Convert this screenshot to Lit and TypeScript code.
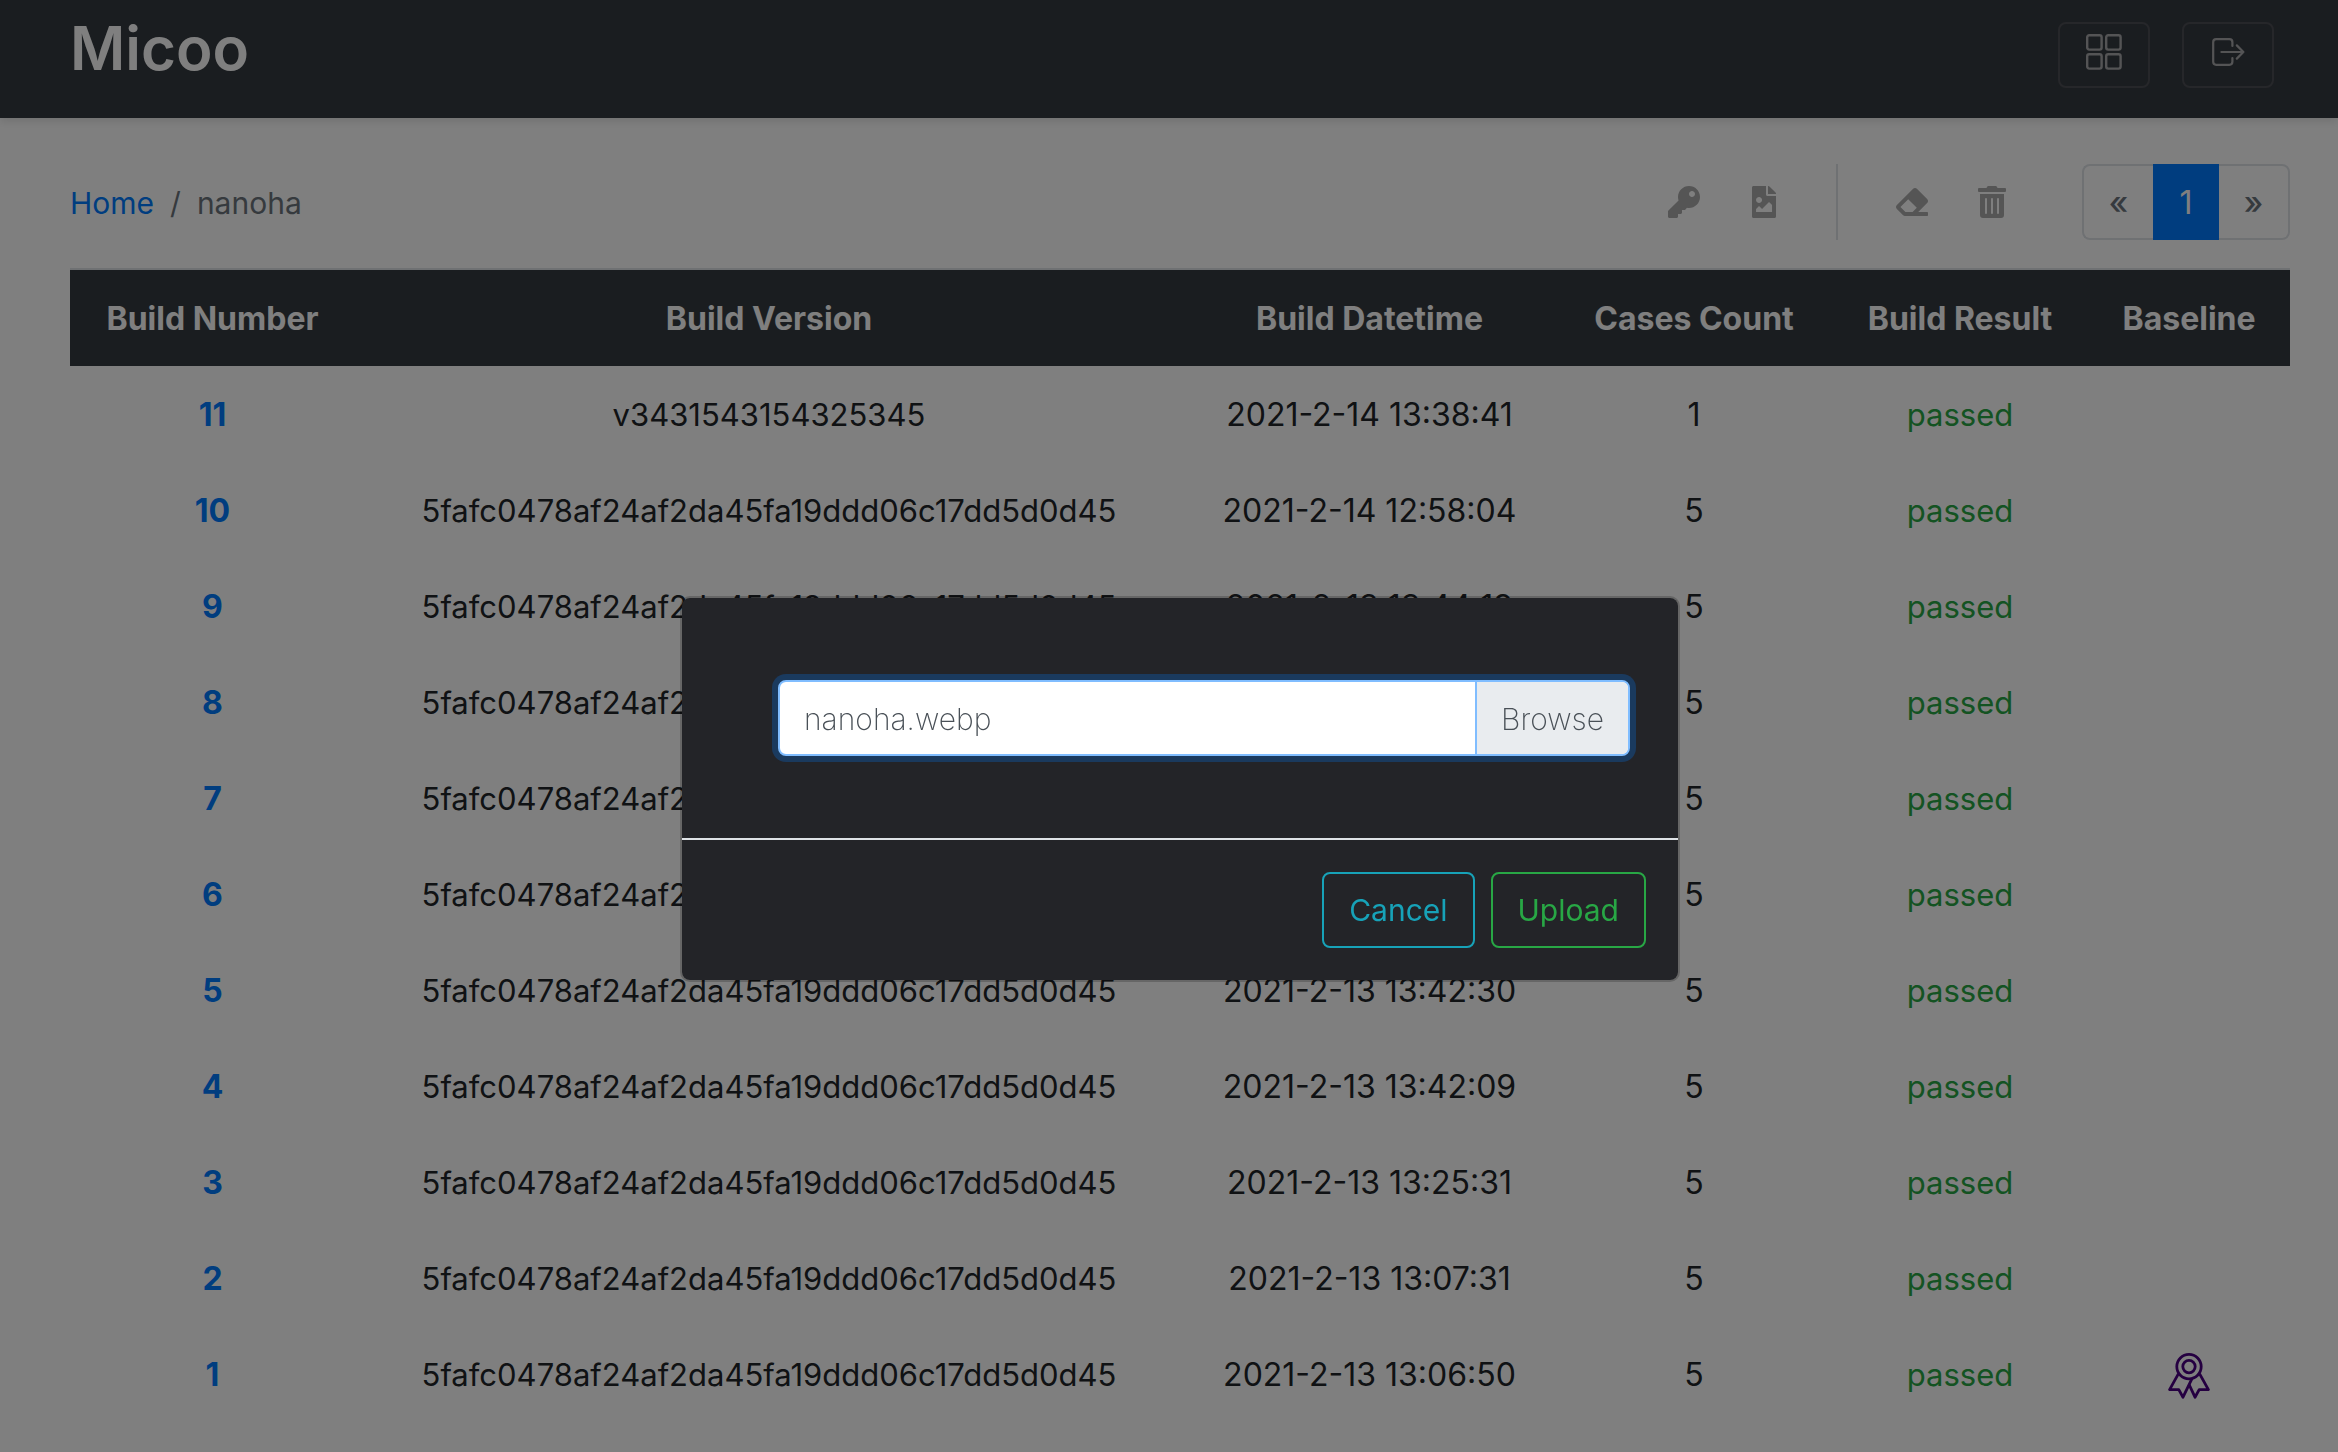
import { LitElement, html, css } from "lit";
import { customElement } from "lit/decorators.js";

interface Build {
  num: number;
  version: string;
  time: string;
  cases: number;
  baseline?: boolean;
}

const HASH = "5fafc0478af24af2da45fa19ddd06c17dd5d0d45";

const BUILDS: Build[] = [
  { num: 11, version: "v3431543154325345", time: "2021-2-14 13:38:41", cases: 1 },
  { num: 10, version: HASH, time: "2021-2-14 12:58:04", cases: 5 },
  { num: 9, version: HASH, time: "2021-2-13 13:44:19", cases: 5 },
  { num: 8, version: HASH, time: "2021-2-13 13:43:52", cases: 5 },
  { num: 7, version: HASH, time: "2021-2-13 13:43:20", cases: 5 },
  { num: 6, version: HASH, time: "2021-2-13 13:42:51", cases: 5 },
  { num: 5, version: HASH, time: "2021-2-13 13:42:30", cases: 5 },
  { num: 4, version: HASH, time: "2021-2-13 13:42:09", cases: 5 },
  { num: 3, version: HASH, time: "2021-2-13 13:25:31", cases: 5 },
  { num: 2, version: HASH, time: "2021-2-13 13:07:31", cases: 5 },
  { num: 1, version: HASH, time: "2021-2-13 13:06:50", cases: 5, baseline: true },
];

const gridIcon = html`<svg width="36" height="36" viewBox="0 0 36 36" fill="none" stroke="currentColor" stroke-width="2.4" aria-hidden="true">
  <rect x="1.2" y="1.2" width="14.4" height="14.4" rx="2" />
  <rect x="20.2" y="1.2" width="14.4" height="14.4" rx="2" />
  <rect x="1.2" y="20.2" width="14.4" height="14.4" rx="2" />
  <rect x="20.2" y="20.2" width="14.4" height="14.4" rx="2" />
</svg>`;

const exitIcon = html`<svg width="34" height="36" viewBox="0 0 34 36" fill="none" stroke="currentColor" stroke-width="2.2" stroke-linecap="round" stroke-linejoin="round" aria-hidden="true">
  <path d="M21.400 12V8.200a3 3 0 0 0-3-3H5.200a3 3 0 0 0-3 3v19.600a3 3 0 0 0 3 3h13.200a3 3 0 0 0 3-3V24" />
  <path d="M10.400 18H32.400M25.800 11.400 32.400 18l-6.600 6.600" />
</svg>`;

const keyIcon = html`<svg width="32" height="32" viewBox="0 0 512 512" aria-hidden="true"><path d="M512 176.001C512 273.203 433.202 352 336 352c-11.220 0-22.190-1.062-32.827-3.069l-24.012 27.014A23.999 23.999 0 0 1 261.223 384H224v40c0 13.255-10.745 24-24 24h-40v40c0 13.255-10.745 24-24 24H24c-13.255 0-24-10.745-24-24v-78.059c0-6.365 2.529-12.470 7.029-16.971l161.802-161.802C163.108 213.814 160 195.271 160 176 160 78.798 238.797.001 335.999 0 433.488-.001 512 78.511 512 176.001zM336 128c0 26.510 21.490 48 48 48s48-21.490 48-48-21.490-48-48-48-48 21.490-48 48z" /></svg>`;

const imageFileIcon = html`<svg width="24" height="32" viewBox="0 0 384 512" aria-hidden="true"><path d="M384 121.941V128H256V0h6.059a24 24 0 0 1 16.970 7.029l97.941 97.941a24.002 24.002 0 0 1 7.030 16.971zM248 160c-13.200 0-24-10.800-24-24V0H24C10.745 0 0 10.745 0 24v464c0 13.255 10.745 24 24 24h336c13.255 0 24-10.745 24-24V160H248zm-135.455 16c26.510 0 48 21.490 48 48s-21.490 48-48 48-48-21.490-48-48 21.491-48 48-48zm208 240h-256l.485-48.485L104.545 328c4.686-4.686 11.799-4.201 16.485.485L160.545 368 264.060 264.485c4.686-4.686 12.284-4.686 16.971 0L320.545 304v112z" /></svg>`;

const eraserIcon = html`<svg width="32" height="32" viewBox="0 0 512 512" aria-hidden="true"><path d="M497.941 273.941c18.745-18.745 18.745-49.137 0-67.882l-160-160c-18.745-18.745-49.136-18.746-67.883 0l-256 256c-18.745 18.745-18.745 49.137 0 67.882l96 96A48.004 48.004 0 0 0 144 480h356c6.627 0 12-5.373 12-12v-40c0-6.627-5.373-12-12-12H355.883l142.058-142.059zm-302.627-62.627l137.373 137.373L265.373 416H150.628l-80-80 124.686-124.686z" /></svg>`;

const trashIcon = html`<svg width="28" height="32" viewBox="0 0 448 512" aria-hidden="true"><path d="M32 464a48 48 0 0 0 48 48h288a48 48 0 0 0 48-48V128H32zm272-256a16 16 0 0 1 32 0v224a16 16 0 0 1-32 0zm-96 0a16 16 0 0 1 32 0v224a16 16 0 0 1-32 0zm-96 0a16 16 0 0 1 32 0v224a16 16 0 0 1-32 0zM432 32H312l-9.400-18.700A24 24 0 0 0 281.100 0H166.800a23.720 23.720 0 0 0-21.400 13.300L136 32H16A16 16 0 0 0 0 48v32a16 16 0 0 0 16 16h416a16 16 0 0 0 16-16V48a16 16 0 0 0-16-16z" /></svg>`;

const awardIcon = html`<svg width="42" height="48" viewBox="0 -2 42 48" fill="none" stroke="currentColor" stroke-width="2.8" stroke-linejoin="round" role="img" aria-label="Baseline build">
  <circle cx="21" cy="13.600" r="12.200" />
  <circle cx="21" cy="13.600" r="6.200" />
  <path d="M10.500 20.600 1.600 36.600h9.200l4.200 7.600L24 25.600" />
  <path d="M31.500 20.600l8.900 16h-9.200L27 44.200 21 31.400" />
</svg>`;

@customElement("app-root")
export class AppRoot extends LitElement {
  static styles = css`
    :host {
      display: block;
      min-height: 100vh;
      background: #fff;
      color: #212529;
      font-family: Inter, "Liberation Sans", sans-serif;
      font-size: 32px;
      line-height: 48px;
    }
    * { box-sizing: border-box; }
    a { color: #007bff; text-decoration: none; }
    button { font: inherit; cursor: pointer; }

    .topbar {
      display: flex;
      align-items: flex-start;
      justify-content: space-between;
      height: 118px;
      padding: 0 64px 0 70px;
      background: #343a40;
      box-shadow: 0 4px 8px rgba(0, 0, 0, 0.1);
    }
    .brand { color: #fff; font-size: 60px; line-height: 96px; font-weight: 600; }
    .top-actions { display: flex; gap: 32px; padding-top: 22px; }
    .top-btn {
      display: flex;
      justify-content: center;
      width: 92px;
      height: 66px;
      padding: 10px 0 0;
      color: #a9a9ab;
      background: transparent;
      border: 2px solid #4d4e54;
      border-radius: 8px;
    }

    .page { padding: 46px 48px 0 70px; }
    .toolbar {
      display: flex;
      align-items: center;
      justify-content: space-between;
      height: 76px;
      margin-bottom: 28px;
    }
    .crumbs {
      display: flex;
      gap: 16px;
      margin: 0;
      padding: 2px 0 0;
      list-style: none;
      font-size: 30px;
      color: #6c757d;
    }
    .tools { display: flex; align-items: center; }
    .tool {
      display: flex;
      align-items: center;
      justify-content: center;
      width: 80px;
      height: 76px;
      padding: 0;
      color: #aaa;
      background: none;
      border: 0;
    }
    .tool svg { fill: currentColor; }
    .split { width: 2px; height: 76px; margin: 0 34px 0 32px; background: #dee2e6; }
    .pager {
      display: flex;
      margin: 0 0 0 50px;
      padding: 0;
      list-style: none;
    }
    .pager a {
      display: block;
      height: 76px;
      width: 71px;
      padding: 13px 0 11px;
      border: 2px solid #dee2e6;
      text-align: center;
      color: #6c757d;
      font-weight: 500;
    }
    .pager li:first-child a { border-right: 0; border-radius: 8px 0 0 8px; }
    .pager li:last-child a { border-left: 0; border-radius: 0 8px 8px 0; }
    .pager .current {
      width: 66px;
      color: #fff;
      background: #007bff;
      border-color: #007bff;
      font-weight: 400;
    }

    .builds {
      width: 100%;
      table-layout: fixed;
      border-collapse: separate;
      border-spacing: 0;
      text-align: center;
    }
    .builds td { height: 96px; padding: 2px 0 0; }
    .builds th {
      height: 98px;
      padding: 2px 0 0;
      color: #fff;
      background: #343a40;
      border-top: 2px solid #dee2e6;
      font-weight: 700;
    }
    .c-num { width: 285px; }
    .c-ver { width: 828px; }
    .c-time { width: 373px; }
    .c-cases { width: 276px; }
    .c-result { width: 256px; }
    .c-base { width: 202px; }
    .num { font-weight: 700; }
    .builds .version { font-size: 31px; }
    .builds .passed { color: #28a745; font-size: 31px; }
    .award { color: #4b0082; line-height: 0; }

    .backdrop {
      position: fixed;
      inset: 0;
      display: flex;
      align-items: flex-start;
      justify-content: center;
      padding: 596px 0 0 22px;
      background: rgba(0, 0, 0, 0.5);
    }
    .modal {
      width: 1000px;
      font-size: 30px;
      background: #232428;
      background-clip: padding-box;
      border: 2px solid rgba(0, 0, 0, 0.2);
      border-radius: 10px;
    }
    .modal-body { padding: 82px 48px 82px 96px; }
    .modal-foot {
      display: flex;
      justify-content: flex-end;
      gap: 16px;
      padding: 32px;
      border-top: 2px solid #dee2e6;
    }
    .file { position: relative; }
    .file-input { position: absolute; inset: 0; width: 100%; height: 100%; margin: 0; opacity: 0; }
    .file-label {
      display: flex;
      height: 76px;
      color: #495057;
      font-weight: 200;
      background: #fff;
      border: 2px solid #80bdff;
      border-radius: 8px;
      box-shadow: 0 0 0 6px rgba(0, 123, 255, 0.25);
      overflow: hidden;
    }
    .file-name { flex: 1; padding: 13px 24px 11px; }
    .file-browse { padding: 13px 24px 11px; background: #e9ecef; border-left: 2px solid #80bdff; }
    .btn {
      height: 76px;
      padding: 0 25px;
      background: transparent;
      border: 2px solid currentColor;
      border-radius: 8px;
    }
    .cancel { color: #17a2b8; }
    .upload { color: #28a745; }
  `;

  private row(b: Build) {
    return html`<tr>
      <td><a class="num" href="#build-${b.num}">${b.num}</a></td>
      <td class="version">${b.version}</td>
      <td>${b.time}</td>
      <td>${b.cases}</td>
      <td class="passed">passed</td>
      <td class="award">${b.baseline ? awardIcon : ""}</td>
    </tr>`;
  }

  render() {
    return html`
      <header class="topbar">
        <a class="brand" href="#home">Micoo</a>
        <div class="top-actions">
          <button class="top-btn" aria-label="Projects">${gridIcon}</button>
          <button class="top-btn" aria-label="Log out">${exitIcon}</button>
        </div>
      </header>
      <main class="page">
        <div class="toolbar">
          <nav aria-label="Breadcrumb">
            <ol class="crumbs">
              <li><a href="#home">Home</a></li>
              <li aria-hidden="true">/</li>
              <li aria-current="page">nanoha</li>
            </ol>
          </nav>
          <div class="tools">
            <button class="tool" aria-label="API key">${keyIcon}</button>
            <button class="tool" aria-label="Project image">${imageFileIcon}</button>
            <div class="split"></div>
            <button class="tool" aria-label="Clean builds">${eraserIcon}</button>
            <button class="tool" aria-label="Delete project">${trashIcon}</button>
            <ul class="pager">
              <li><a href="#prev" aria-label="Previous">«</a></li>
              <li><a class="current" href="#page-1">1</a></li>
              <li><a href="#next" aria-label="Next">»</a></li>
            </ul>
          </div>
        </div>
        <table class="builds">
          <colgroup>
            <col class="c-num" /><col class="c-ver" /><col class="c-time" />
            <col class="c-cases" /><col class="c-result" /><col class="c-base" />
          </colgroup>
          <thead>
            <tr>
              <th>Build Number</th>
              <th>Build Version</th>
              <th>Build Datetime</th>
              <th>Cases Count</th>
              <th>Build Result</th>
              <th>Baseline</th>
            </tr>
          </thead>
          <tbody>${BUILDS.map((b) => this.row(b))}</tbody>
        </table>
      </main>
      <div class="backdrop">
        <form class="modal" role="dialog" aria-modal="true" aria-label="Upload image" @submit=${(e: Event) => e.preventDefault()}>
          <div class="modal-body">
            <div class="file">
              <input class="file-input" id="image" type="file" />
              <label class="file-label" for="image">
                <span class="file-name">nanoha.webp</span>
                <span class="file-browse">Browse</span>
              </label>
            </div>
          </div>
          <div class="modal-foot">
            <button class="btn cancel" type="button">Cancel</button>
            <button class="btn upload" type="submit">Upload</button>
          </div>
        </form>
      </div>
    `;
  }
}
